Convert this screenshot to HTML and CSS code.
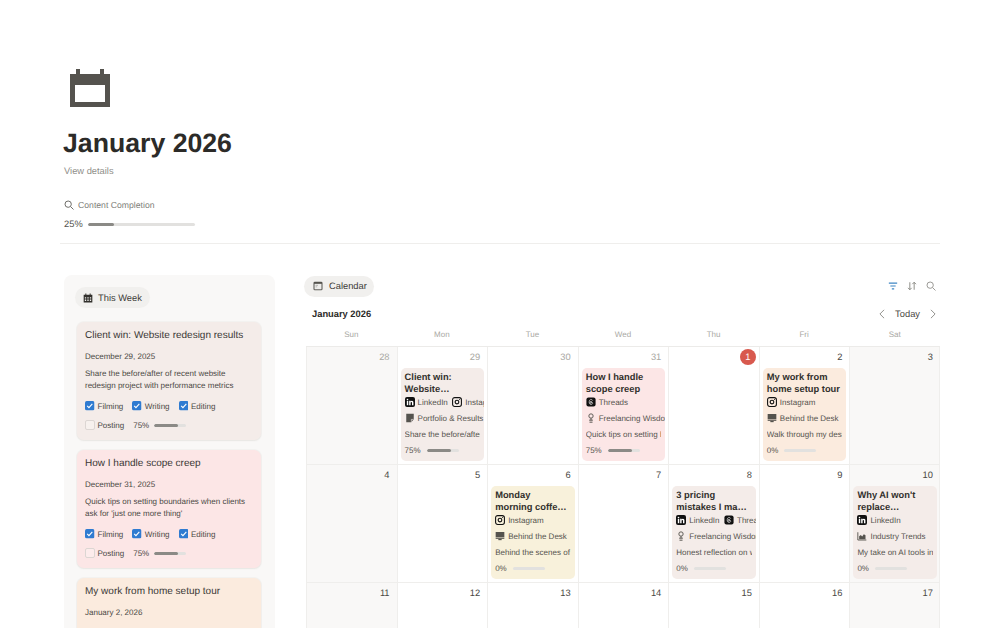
FILE: index.html
```html
<!DOCTYPE html>
<html lang="en">
<head>
    <meta charset="UTF-8">
    <title>January 2026</title>
    <link rel="stylesheet" href="styles.css">
</head>
<body>
<svg class="defs" width="0" height="0">
    <symbol id="i-linkedin" viewBox="0 0 12 12">
        <rect width="12" height="12" rx="2.4" fill="#111"/>
        <rect x="2.2" y="4.6" width="1.7" height="5.2" fill="#fff"/>
        <circle cx="3" cy="3" r="1" fill="#fff"/>
        <path d="M5 4.6h1.6v.8c.4-.6 1-.9 1.7-.9 1.3 0 1.8.9 1.8 2.2v3.1H8.4V7c0-.7-.2-1.1-.8-1.1s-.9.5-.9 1.1v2.8H5z" fill="#fff"/>
    </symbol>
    <symbol id="i-instagram" viewBox="0 0 12 12">
        <rect x=".7" y=".7" width="10.6" height="10.6" rx="2.6" fill="none" stroke="#111" stroke-width="1.3"/>
        <circle cx="6" cy="6" r="2.2" fill="none" stroke="#111" stroke-width="1.3"/>
        <circle cx="9" cy="3" r=".6" fill="#111"/>
    </symbol>
    <symbol id="i-threads" viewBox="0 0 12 12">
        <rect x=".5" y=".5" width="11" height="11" rx="2.4" fill="#111"/>
        <path d="M8.1 4.4C7.8 3.5 7.1 3 6 3 4.6 3 3.8 4 3.8 6s.8 3 2.2 3c1.2 0 2-.7 2-1.6 0-1-.9-1.5-2.1-1.4-.8 0-1.2.4-1.2.9s.5.8 1 .8c.7 0 1.1-.5 1.1-1.3 0-.7-.4-1.2-1-1.2-.4 0-.7.2-.9.4" fill="none" stroke="#fff" stroke-width=".7"/>
    </symbol>
    <symbol id="i-note" viewBox="0 0 12 12">
        <path d="M1.5 1h9v6.5L7.5 11h-6z" fill="#55534e"/>
        <path d="M7.6 10.6V7.7h2.8" fill="none" stroke="#f4ecea" stroke-width=".8"/>
    </symbol>
    <symbol id="i-bulb" viewBox="0 0 12 12">
        <circle cx="6" cy="3.6" r="2.6" fill="none" stroke="#55534e" stroke-width="1.1"/>
        <path d="M6 6.2v2.4M3.8 8.6h4.4M4.2 11h3.6" fill="none" stroke="#55534e" stroke-width="1.2"/>
    </symbol>
    <symbol id="i-desk" viewBox="0 0 12 12">
        <rect x=".8" y="1.2" width="10.4" height="6.4" fill="#55534e"/>
        <rect x=".8" y="8.2" width="10.4" height="1.2" fill="#55534e"/>
        <rect x="4" y="9.6" width="4" height="1.4" fill="#55534e"/>
    </symbol>
    <symbol id="i-chart" viewBox="0 0 12 12">
        <path d="M1 1.5v9.3h10.2" fill="none" stroke="#55534e" stroke-width="1.1"/>
        <path d="M2.6 9.8V6.4l2-1.6 1.6 1.8 2-2.8 2 1.4v4.6z" fill="#55534e"/>
    </symbol>
    <symbol id="i-check" viewBox="0 0 14 14">
        <rect width="14" height="14" rx="2.5" fill="#2f7bd1"/>
        <path d="M3.2 7.2l2.6 2.7 5-5.6" fill="none" stroke="#fff" stroke-width="1.6"/>
    </symbol>
</svg>

<div class="page">
    <header class="head">
        <svg class="head-icon" viewBox="0 0 40 38">
            <path d="M0 5h6V0h4v5h20V0h4v5h6v33H0z M5 16v17h30V16z" fill="#55534e" fill-rule="evenodd"/>
        </svg>
        <h1>January 2026</h1>
        <div class="details">View details</div>
        <div class="stat-label">
            <svg class="ic-12" viewBox="0 0 12 12"><circle cx="5" cy="5" r="3.8" fill="none" stroke="#6f6e69" stroke-width="1.2"/><path d="M8 8l3.4 3.4" stroke="#6f6e69" stroke-width="1.2"/></svg>
            Content Completion
        </div>
        <div class="stat-value">
            25%
            <div class="bar bar-big"><span class="bar-fill fill-25"></span></div>
        </div>
    </header>
    <div class="rule"></div>

    <div class="main">
        <aside class="side">
            <div class="pill">
                <svg class="ic-12" viewBox="0 0 12 12"><path d="M.8 2h2V.6h1.2V2h4V.6h1.2V2h2v9.4H.8z" fill="#32302c"/><path d="M2.2 5h1.6v1.6H2.2zM5.2 5h1.6v1.6H5.2zM8.2 5h1.6v1.6H8.2zM2.2 7.9h1.6v1.6H2.2zM5.2 7.9h1.6v1.6H5.2zM8.2 7.9h1.6v1.6H8.2z" fill="#f1f0ee"/></svg>
                This Week
            </div>
            <div class="week-list">
                <article class="week-card tone-grey">
                    <h3>Client win: Website redesign results</h3>
                    <div class="week-date">December 29, 2025</div>
                    <p>Share the before/after of recent website redesign project with performance metrics</p>
                    <div class="checks">
                        <span class="check"><svg class="box"><use href="#i-check"/></svg>Filming</span>
                        <span class="check"><svg class="box"><use href="#i-check"/></svg>Writing</span>
                        <span class="check"><svg class="box"><use href="#i-check"/></svg>Editing</span>
                    </div>
                    <div class="checks">
                        <span class="check"><span class="box box-empty"></span>Posting</span>
                        <span class="progress">75%<span class="bar bar-small"><span class="bar-fill fill-75"></span></span></span>
                    </div>
                </article>
                <article class="week-card tone-red">
                    <h3>How I handle scope creep</h3>
                    <div class="week-date">December 31, 2025</div>
                    <p>Quick tips on setting boundaries when clients ask for 'just one more thing'</p>
                    <div class="checks">
                        <span class="check"><svg class="box"><use href="#i-check"/></svg>Filming</span>
                        <span class="check"><svg class="box"><use href="#i-check"/></svg>Writing</span>
                        <span class="check"><svg class="box"><use href="#i-check"/></svg>Editing</span>
                    </div>
                    <div class="checks">
                        <span class="check"><span class="box box-empty"></span>Posting</span>
                        <span class="progress">75%<span class="bar bar-small"><span class="bar-fill fill-75"></span></span></span>
                    </div>
                </article>
                <article class="week-card tone-orange">
                    <h3>My work from home setup tour</h3>
                    <div class="week-date">January 2, 2026</div>
                </article>
            </div>
        </aside>

        <section class="cal">
            <div class="cal-tabs">
                <div class="pill">
                    <svg class="ic-12" viewBox="0 0 12 12"><rect x=".6" y=".8" width="10.8" height="10.4" rx="1.6" fill="#55534e"/><rect x="1.8" y="3.4" width="8.4" height="6.6" fill="#eeedeb"/><path d="M3 5.2h3M3 7h2" stroke="#9b9a96" stroke-width=".8"/></svg>
                    Calendar
                </div>
                <div class="tools">
                    <svg class="ic-12" viewBox="0 0 12 12"><path d="M1 2.6h10M2.8 6h6.4M4.6 9.4h2.8" stroke="#3f86c4" stroke-width="1.4"/></svg>
                    <svg class="ic-12" viewBox="0 0 12 12"><path d="M3.4 1.5v9M1.2 8.2l2.2 2.3 2.2-2.3M8.6 10.5v-9M6.4 3.8l2.2-2.3 2.2 2.3" fill="none" stroke="#86857f" stroke-width="1.1"/></svg>
                    <svg class="ic-12" viewBox="0 0 12 12"><circle cx="5" cy="5" r="3.8" fill="none" stroke="#9b9a96" stroke-width="1.2"/><path d="M8 8l3.4 3.4" stroke="#9b9a96" stroke-width="1.2"/></svg>
                </div>
            </div>
            <div class="cal-bar">
                <strong>January 2026</strong>
                <div class="cal-nav">
                    <svg class="ic-chev" viewBox="0 0 8 12"><path d="M6.5 1L1.5 6l5 5" fill="none" stroke="#8a8984" stroke-width="1.1"/></svg>
                    <span>Today</span>
                    <svg class="ic-chev" viewBox="0 0 8 12"><path d="M1.5 1l5 5-5 5" fill="none" stroke="#8a8984" stroke-width="1.1"/></svg>
                </div>
            </div>
            <div class="weekdays">
                <div>Sun</div><div>Mon</div><div>Tue</div><div>Wed</div><div>Thu</div><div>Fri</div><div>Sat</div>
            </div>
            <div class="grid">
                <div class="day off dim"><div class="num">28</div></div>
                <div class="day dim">
                    <div class="num">29</div>
                    <div class="ev tone-grey">
                        <div class="ev-title">Client win:<br>Website…</div>
                        <div class="ev-row">
                            <svg class="ev-ic"><use href="#i-linkedin"/></svg>LinkedIn
                            <svg class="ev-ic ev-next"><use href="#i-instagram"/></svg>Instagram
                        </div>
                        <div class="ev-row"><svg class="ev-ic"><use href="#i-note"/></svg>Portfolio &amp; Results</div>
                        <div class="ev-row ev-desc">Share the before/after of recent website</div>
                        <div class="ev-pct">75%<span class="bar bar-small"><span class="bar-fill fill-75"></span></span></div>
                    </div>
                </div>
                <div class="day dim"><div class="num">30</div></div>
                <div class="day dim">
                    <div class="num">31</div>
                    <div class="ev tone-red">
                        <div class="ev-title">How I handle<br>scope creep</div>
                        <div class="ev-row"><svg class="ev-ic"><use href="#i-threads"/></svg>Threads</div>
                        <div class="ev-row"><svg class="ev-ic"><use href="#i-bulb"/></svg>Freelancing Wisdom</div>
                        <div class="ev-row ev-desc">Quick tips on setting boundaries when</div>
                        <div class="ev-pct">75%<span class="bar bar-small"><span class="bar-fill fill-75"></span></span></div>
                    </div>
                </div>
                <div class="day"><div class="num"><span class="today">1</span></div></div>
                <div class="day">
                    <div class="num">2</div>
                    <div class="ev tone-orange">
                        <div class="ev-title">My work from<br>home setup tour</div>
                        <div class="ev-row"><svg class="ev-ic"><use href="#i-instagram"/></svg>Instagram</div>
                        <div class="ev-row"><svg class="ev-ic"><use href="#i-desk"/></svg>Behind the Desk</div>
                        <div class="ev-row ev-desc">Walk through my desk setup and tools</div>
                        <div class="ev-pct">0%<span class="bar bar-small"></span></div>
                    </div>
                </div>
                <div class="day off"><div class="num">3</div></div>

                <div class="day off"><div class="num">4</div></div>
                <div class="day"><div class="num">5</div></div>
                <div class="day">
                    <div class="num">6</div>
                    <div class="ev tone-yellow">
                        <div class="ev-title">Monday<br>morning coffe…</div>
                        <div class="ev-row"><svg class="ev-ic"><use href="#i-instagram"/></svg>Instagram</div>
                        <div class="ev-row"><svg class="ev-ic"><use href="#i-desk"/></svg>Behind the Desk</div>
                        <div class="ev-row ev-desc">Behind the scenes of my morning</div>
                        <div class="ev-pct">0%<span class="bar bar-small"></span></div>
                    </div>
                </div>
                <div class="day"><div class="num">7</div></div>
                <div class="day">
                    <div class="num">8</div>
                    <div class="ev tone-grey">
                        <div class="ev-title">3 pricing<br>mistakes I ma…</div>
                        <div class="ev-row">
                            <svg class="ev-ic"><use href="#i-linkedin"/></svg>LinkedIn
                            <svg class="ev-ic ev-next"><use href="#i-threads"/></svg>Threads
                        </div>
                        <div class="ev-row"><svg class="ev-ic"><use href="#i-bulb"/></svg>Freelancing Wisdom</div>
                        <div class="ev-row ev-desc">Honest reflection on what I got wrong</div>
                        <div class="ev-pct">0%<span class="bar bar-small"></span></div>
                    </div>
                </div>
                <div class="day"><div class="num">9</div></div>
                <div class="day off">
                    <div class="num">10</div>
                    <div class="ev tone-grey">
                        <div class="ev-title">Why AI won't<br>replace…</div>
                        <div class="ev-row"><svg class="ev-ic"><use href="#i-linkedin"/></svg>LinkedIn</div>
                        <div class="ev-row"><svg class="ev-ic"><use href="#i-chart"/></svg>Industry Trends</div>
                        <div class="ev-row ev-desc">My take on AI tools in creative work</div>
                        <div class="ev-pct">0%<span class="bar bar-small"></span></div>
                    </div>
                </div>

                <div class="day off"><div class="num">11</div></div>
                <div class="day"><div class="num">12</div></div>
                <div class="day"><div class="num">13</div></div>
                <div class="day"><div class="num">14</div></div>
                <div class="day"><div class="num">15</div></div>
                <div class="day"><div class="num">16</div></div>
                <div class="day off"><div class="num">17</div></div>
            </div>
        </section>
    </div>
</div>
</body>
</html>
```

FILE: styles.css
```css
*{
    margin: 0;
    padding: 0;
    box-sizing: border-box;
}
html, body{
    height: 100%;
    overflow: hidden;
    background: #fff;
}
body{
    font-family: "Liberation Sans", Arial, sans-serif;
    color: #32302c;
    text-rendering: geometricPrecision;
}
.defs{
    display: block;
    height: 0;
}
.page{
    height: 100vh;
    overflow: hidden;
    padding: 69px 65px 0 60px;
}
.ic-12{
    width: 10px;
    height: 10px;
    flex: none;
}

/* head */
.head{
    padding-left: 4px;
}
.head-icon{
    display: block;
    width: 40px;
    height: 38px;
    margin-left: 6px;
}
h1{
    font-size: 26.67px;
    line-height: 34px;
    font-weight: 700;
    color: #2c2b28;
    margin: 19px 0 0 -1px;
}
.details{
    font-size: 9.33px;
    line-height: 14px;
    color: #8f8e89;
    margin-top: 4px;
}
.stat-label{
    display: flex;
    align-items: center;
    gap: 4px;
    font-size: 8.67px;
    line-height: 14px;
    color: #80807a;
    margin-top: 20px;
}
.stat-value{
    display: flex;
    align-items: center;
    gap: 5px;
    font-size: 9.33px;
    line-height: 14px;
    margin-top: 5px;
    color: #55534e;
}
.rule{
    height: 1px;
    background: #efeeec;
    margin-top: 12px;
}

/* bars */
.bar{
    display: block;
    height: 3px;
    border-radius: 2px;
    background: #e2e1df;
    overflow: hidden;
}
.bar-big{
    width: 107px;
}
.bar-small{
    width: 32px;
}
.bar-fill{
    display: block;
    height: 100%;
    background: #8b8a86;
    border-radius: 2px;
}
.fill-25{
    width: 25%;
}
.fill-75{
    width: 75%;
}

/* main */
.main{
    display: flex;
    margin-top: 31px;
    padding-left: 4px;
    gap: 29px;
}
.pill{
    display: inline-flex;
    align-items: center;
    gap: 5px;
    height: 21px;
    padding: 0 8px;
    border-radius: 11px;
    background: #f1f0ee;
    font-size: 9.33px;
    color: #3d3b37;
}

/* side */
.side{
    width: 211px;
    flex: none;
    height: 400px;
    padding: 12px 14px 0 11px;
    border-radius: 8px;
    background: #f9f8f7;
}
.week-list{
    display: flex;
    flex-direction: column;
    gap: 10px;
    margin: 14px 0 0 2px;
}
.week-card{
    height: 118px;
    flex: none;
    padding: 7px 8px 0;
    border-radius: 7px;
    box-shadow: 0 0 0 1px rgba(60, 50, 40, .03), 0 1px 2px rgba(60, 50, 40, .06);
    font-size: 8px;
    color: #4a4844;
}
.week-card h3{
    font-size: 10px;
    line-height: 13px;
    font-weight: 400;
    color: #3a3835;
}
.week-date{
    line-height: 12px;
    margin-top: 8.5px;
}
.week-card p{
    line-height: 12px;
    margin-top: 5px;
}
.checks{
    display: flex;
    align-items: center;
    gap: 9px;
    margin-top: 7.5px;
    height: 14px;
}
.checks + .checks{
    margin-top: 5px;
}
.check{
    display: inline-flex;
    align-items: center;
    gap: 3px;
}
.box{
    width: 9.5px;
    height: 9.5px;
    flex: none;
}
.box-empty{
    display: block;
    border: 1px solid #dcd6d3;
    border-radius: 2px;
    background: rgba(255, 255, 255, .25);
}
.progress{
    display: inline-flex;
    align-items: center;
    gap: 5px;
}

.tone-grey{
    background: #f4ece9;
}
.tone-red{
    background: #fce6e6;
}
.tone-orange{
    background: #fbebde;
}
.tone-yellow{
    background: #f8f1db;
}

/* calendar */
.cal{
    flex: 1;
    min-width: 0;
}
.cal-tabs{
    display: flex;
    align-items: center;
    justify-content: space-between;
    height: 22px;
    padding-right: 4px;
}
.cal .pill{
    padding: 0 7px 0 9px;
    gap: 6px;
}
.tools{
    display: flex;
    gap: 9px;
}
.cal-bar{
    display: flex;
    align-items: center;
    justify-content: space-between;
    height: 14px;
    margin: 10px 0 0 8px;
    padding-right: 3px;
    font-size: 9.33px;
}
.cal-bar strong{
    color: #2c2b28;
}
.cal-nav{
    display: flex;
    align-items: center;
    gap: 9px;
    color: #4a4844;
}
.ic-chev{
    width: 8px;
    height: 10px;
}
.weekdays, .grid{
    display: grid;
    grid-template-columns: repeat(7, minmax(0, 1fr));
    margin-left: 2px;
}
.weekdays{
    font-size: 8px;
    line-height: 12px;
    color: #a9a8a3;
    text-align: center;
    margin-top: 8px;
    height: 17px;
}
.grid{
    border-top: 1px solid #ecebe9;
    grid-template-rows: 118px 118px 118px;
}
.day{
    min-width: 0;
    padding: 2px 3px 0 3px;
    border-left: 1px solid #efeeec;
    border-bottom: 1px solid #efeeec;
}
.day:nth-child(7n){
    box-shadow: inset -1px 0 0 #efeeec;
}
.off{
    background: #f9f8f7;
}
.num{
    display: flex;
    justify-content: flex-end;
    align-items: center;
    height: 16px;
    padding-right: 4px;
    font-size: 9.33px;
    color: #4a4844;
}
.dim .num{
    color: #a9a8a3;
}
.today{
    width: 16px;
    height: 16px;
    margin-right: -4px;
    border-radius: 50%;
    background: #d8594e;
    color: #fff;
    text-align: center;
    line-height: 16px;
}

/* events */
.ev{
    height: 93px;
    margin-top: 3px;
    padding: 4px 0 0 4px;
    border-radius: 5px;
    overflow: hidden;
    font-size: 8px;
    color: #55534e;
}
.ev-title{
    height: 22px;
    font-size: 9.33px;
    line-height: 11.67px;
    font-weight: 700;
    white-space: nowrap;
    color: #32302c;
}
.ev-row{
    display: flex;
    align-items: center;
    height: 16.3px;
    white-space: nowrap;
    overflow: hidden;
}
.ev-desc{
    margin-right: 4px;
}
.ev-ic{
    width: 10px;
    height: 10px;
    flex: none;
    margin-right: 3px;
}
.ev-next{
    margin-left: 4.5px;
}
.ev-pct{
    display: flex;
    align-items: center;
    gap: 6px;
    height: 16px;
}
```
